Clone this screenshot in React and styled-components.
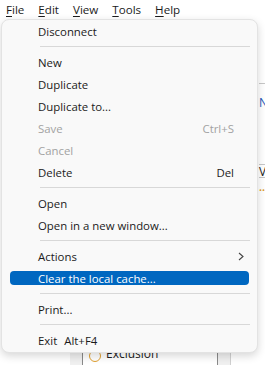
import React from 'react';
import styled, { createGlobalStyle } from 'styled-components';

const GlobalStyle = createGlobalStyle`
  html, body {
    margin: 0;
    padding: 0;
    background: #ffffff;
    overflow: hidden;
  }
  body {
    font-family: "Open Sans", "Noto Sans", sans-serif;
    font-size: 11.4px;
    color: #1b1b1b;
  }
`;

const menuBarItems = ['File', 'Edit', 'View', 'Tools', 'Help'];

const fileMenu = [
  { label: 'Disconnect' },
  { sep: true },
  { label: 'New' },
  { label: 'Duplicate' },
  { label: 'Duplicate to...' },
  { label: 'Save', shortcut: 'Ctrl+S', disabled: true },
  { label: 'Cancel', disabled: true },
  { label: 'Delete', shortcut: 'Del' },
  { sep: true },
  { label: 'Open' },
  { label: 'Open in a new window...' },
  { sep: true },
  { label: 'Actions', submenu: true },
  { label: 'Clear the local cache...', active: true },
  { sep: true },
  { label: 'Print...' },
  { sep: true },
  { label: 'Exit', inlineShortcut: 'Alt+F4' },
];

export default function App() {
  return (
    <Page>
      <GlobalStyle />
      <MenuBar>
        {menuBarItems.map((item) => (
          <BarItem key={item}>
            <u>{item[0]}</u>
            {item.slice(1)}
          </BarItem>
        ))}
      </MenuBar>

      <Workspace>
        <LeftPane />
        <TreePane>
          <TreeBox>
            <TreeRow>
              <TreeIcon />
              <TreeLabel>Exclusion</TreeLabel>
            </TreeRow>
          </TreeBox>
        </TreePane>
        <DetailPane>
          <DetailRow $h={22} />
          <DetailRow $h={42} $line />
          <DetailRow $h={37}>
            <BlueText>N</BlueText>
          </DetailRow>
          <DetailRow $h={43} $line />
          <DetailRow $h={12} $line>
            <DarkText>
              V<Orange>·</Orange>
            </DarkText>
          </DetailRow>
          <DetailRow $h={22}>
            <Dots>• •</Dots>
          </DetailRow>
        </DetailPane>

        <Dropdown>
          {fileMenu.map((item, i) =>
            item.sep ? (
              <Separator key={i} />
            ) : (
              <MenuItem key={i} $disabled={item.disabled} $active={item.active}>
                <ItemLabel>
                  {item.label}
                  {item.inlineShortcut && <InlineKey>{item.inlineShortcut}</InlineKey>}
                </ItemLabel>
                {item.shortcut && <Shortcut>{item.shortcut}</Shortcut>}
                {item.submenu && (
                  <Chevron width="6" height="9" viewBox="0 0 6 9">
                    <polyline points="1,1 5,4.5 1,8" fill="none" stroke="#444" strokeWidth="1.1" />
                  </Chevron>
                )}
              </MenuItem>
            )
          )}
        </Dropdown>
      </Workspace>
    </Page>
  );
}

const Page = styled.div`
  width: 265px;
  height: 365px;
  display: flex;
  flex-direction: column;
  overflow: hidden;
`;

const MenuBar = styled.div`
  display: flex;
  align-items: center;
  gap: 14px;
  height: 19px;
  padding-left: 6px;
  font-size: 11.6px;
  color: #1b1b1b;

  u {
    text-underline-offset: 2px;
  }
`;

const BarItem = styled.span`
  line-height: 19px;
`;

const Workspace = styled.div`
  position: relative;
  flex: 1;
  display: grid;
  grid-template-columns: 70px 160px 1fr;
`;

const LeftPane = styled.div`
  background: #ffffff;
`;

const TreePane = styled.div`
  background: #f0f0f0;
  display: flex;
  padding: 0 12px;
`;

const TreeBox = styled.div`
  flex: 1;
  display: flex;
  flex-direction: column;
  justify-content: flex-end;
  background: #ffffff;
  border-left: 1px solid #8a8a8a;
  border-right: 1px solid #8a8a8a;
  padding-left: 6px;
`;

const TreeRow = styled.div`
  display: flex;
  align-items: center;
  gap: 5px;
  height: 16px;
  margin-bottom: 4px;
`;

const TreeIcon = styled.span`
  width: 10px;
  height: 10px;
  border: 1.5px solid #e0a030;
  border-radius: 50%;
  margin-top: 6px;
`;

const TreeLabel = styled.span`
  font-size: 12px;
  color: #222;
`;

const DetailPane = styled.div`
  display: flex;
  flex-direction: column;
  border-left: 1px solid #d0d0d0;
  padding-left: 28px;
`;

const DetailRow = styled.div`
  height: ${(p) => p.$h}px;
  display: flex;
  align-items: center;
  border-bottom: ${(p) => (p.$line ? '1px solid #c8c8c8' : 'none')};
  font-size: 12px;
`;

const BlueText = styled.span`
  color: #2a5ab8;
`;

const DarkText = styled.span`
  color: #222;
`;

const Orange = styled.span`
  color: #e0a030;
`;

const Dots = styled.span`
  color: #e0a030;
  font-size: 8px;
  letter-spacing: -1px;
`;

const Dropdown = styled.div`
  position: absolute;
  top: 0;
  left: 1px;
  width: 255px;
  padding: 0 0 1px;
  background: #f9f9f9;
  border: 1px solid #e3e3e3;
  border-radius: 8px;
  box-shadow: 0 3px 9px rgba(0, 0, 0, 0.16);
  display: flex;
  flex-direction: column;
  z-index: 2;
`;

const MenuItem = styled.div`
  position: relative;
  height: 22px;
  display: flex;
  align-items: center;
  padding: 0 23px 0 36px;
  color: ${(p) => (p.$active ? '#ffffff' : p.$disabled ? '#a2a2a2' : '#1b1b1b')};
  z-index: 0;

  &::before {
    content: '';
    position: absolute;
    z-index: -1;
    left: 8px;
    right: 8px;
    top: 4px;
    bottom: 4px;
    border-radius: 4px;
    background: ${(p) => (p.$active ? '#0067c0' : 'transparent')};
  }
`;

const ItemLabel = styled.span`
  flex: 1;
  white-space: nowrap;
`;

const InlineKey = styled.span`
  margin-left: 7px;
`;

const Shortcut = styled.span`
  white-space: nowrap;
`;

const Chevron = styled.svg`
  position: absolute;
  right: 13px;
  top: 7px;
`;

const Separator = styled.div`
  height: 9px;
  display: flex;
  align-items: center;
  padding: 0 7px 0 38px;

  &::after {
    content: '';
    flex: 1;
    height: 1px;
    background: #d8d8d8;
  }
`;
